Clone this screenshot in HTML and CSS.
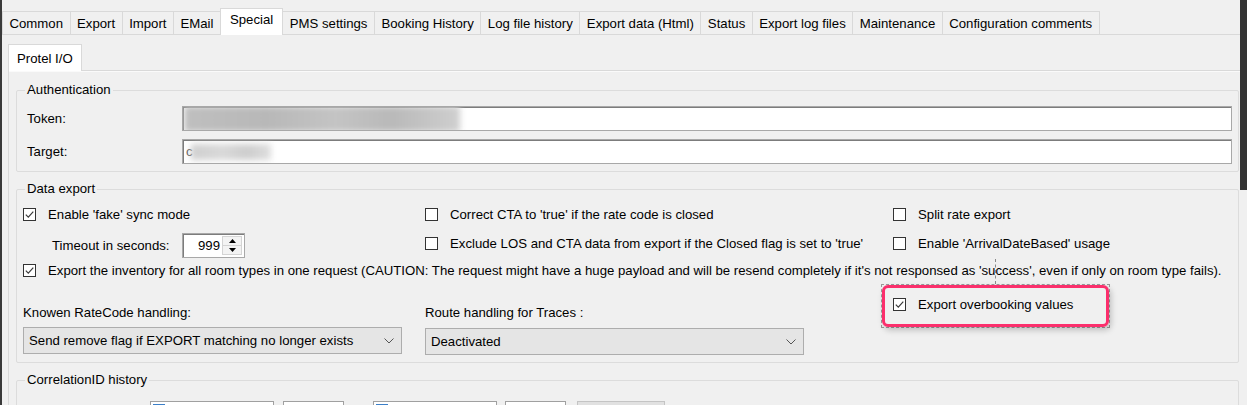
FILE: index.html
```html
<!DOCTYPE html>
<html>
<head>
<meta charset="utf-8">
<link rel="stylesheet" href="styles.css">
</head>
<body>
<div class="window">
  <div class="edge-l"></div>
  <div class="main">
    <div class="tabs">
      <div class="tab first">Common</div>
      <div class="tab">Export</div>
      <div class="tab">Import</div>
      <div class="tab">EMail</div>
      <div class="tab sel">Special</div>
      <div class="tab">PMS settings</div>
      <div class="tab">Booking History</div>
      <div class="tab">Log file history</div>
      <div class="tab">Export data (Html)</div>
      <div class="tab">Status</div>
      <div class="tab">Export log files</div>
      <div class="tab">Maintenance</div>
      <div class="tab">Configuration comments</div>
    </div>
    <div class="panel">
      <div class="subtabs"><div class="subtab">Protel I/O</div></div>
      <div class="subpanel">
        <fieldset class="group auth">
          <legend>Authentication</legend>
          <div class="field">
            <span class="flabel">Token:</span>
            <div class="textbox"><div class="blur blur-token"></div></div>
          </div>
          <div class="field">
            <span class="flabel">Target:</span>
            <div class="textbox"><span class="tchar">c</span><div class="blur blur-target"></div></div>
          </div>
        </fieldset>

        <fieldset class="group data">
          <legend>Data export</legend>
          <div class="row-a">
            <div class="col c1">
              <div class="check-line"><span class="cb on"><svg viewBox="0 0 11 11" width="11" height="11"><path d="M1.8 5.6 L4.3 8.2 L9.3 2.6" fill="none" stroke="#3a3a3a" stroke-width="1.2"/></svg></span>Enable 'fake' sync mode</div>
              <div class="timeout">
                <span class="tlabel">Timeout in seconds:</span>
                <div class="numeric">
                  <span class="nval">999</span>
                  <div class="spin">
                    <div class="sbtn"><svg width="7" height="4" viewBox="0 0 7 4"><path d="M0 4 L3.5 0 L7 4Z" fill="#000"/></svg></div>
                    <div class="sbtn"><svg width="7" height="4" viewBox="0 0 7 4"><path d="M0 0 L3.5 4 L7 0Z" fill="#000"/></svg></div>
                  </div>
                </div>
              </div>
            </div>
            <div class="col c2">
              <div class="check-line"><span class="cb"></span>Correct CTA to 'true' if the rate code is closed</div>
              <div class="check-line second">
                <span class="cb"></span>Exclude LOS and CTA data from export if the Closed flag is set to 'true'</div>
            </div>
            <div class="col c3">
              <div class="check-line"><span class="cb"></span>Split rate export</div>
              <div class="check-line second"><span class="cb"></span>Enable 'ArrivalDateBased' usage</div>
            </div>
          </div>
          <div class="row-b">
            <div class="check-line"><span class="cb on"><svg viewBox="0 0 11 11" width="11" height="11"><path d="M1.8 5.6 L4.3 8.2 L9.3 2.6" fill="none" stroke="#3a3a3a" stroke-width="1.2"/></svg></span>Export the inventory for all room types in one request (CAUTION: The request might have a huge payload and will be resend completely if it's not responsed as 'success', even if only on room type fails).</div>
          </div>
          <div class="row-c">
            <div class="col c1 lower">
              <div class="clabel">Knowen RateCode handling:</div>
              <div class="combo"><span>Send remove flag if EXPORT matching no longer exists</span><svg width="10" height="6" viewBox="0 0 10 6"><path d="M0.5 0.5 L5 5 L9.5 0.5" fill="none" stroke="#555" stroke-width="1"/></svg></div>
            </div>
            <div class="col c2 lower">
              <div class="clabel">Route handling for Traces :</div>
              <div class="combo c-route"><span>Deactivated</span><svg width="10" height="6" viewBox="0 0 10 6"><path d="M0.5 0.5 L5 5 L9.5 0.5" fill="none" stroke="#555" stroke-width="1"/></svg></div>
            </div>
            <div class="col c3 over">
              <div class="check-line"><span class="cb on"><svg viewBox="0 0 11 11" width="11" height="11"><path d="M1.8 5.6 L4.3 8.2 L9.3 2.6" fill="none" stroke="#3a3a3a" stroke-width="1.2"/></svg></span>Export overbooking values</div>
            </div>
          </div>
        </fieldset>

        <fieldset class="group corr">
          <legend>CorrelationID history</legend>
          <div class="corr-row">
            <div class="dtp d1"><span class="dcb"></span></div>
            <div class="nsmall"></div>
            <div class="dtp d2"><span class="dcb"></span></div>
            <div class="nsmall"></div>
            <div class="btn"></div>
            <div class="btn btn-r"></div>
          </div>
        </fieldset>
      </div>
    </div>
  </div>
  <div class="edge-r"></div>
  <div class="focus-line"></div>
  <div class="focus-rect"></div>
  <div class="highlight"></div>
</div>
</body>
</html>
```

FILE: styles.css
```css
html, body {
  margin: 0;
  padding: 0;
}
body {
  width: 1247px;
  height: 405px;
  overflow: hidden;
  background: #f0f0f0;
  font-family: "Liberation Sans", Arial, sans-serif;
  font-size: 13.2px;
  color: #000;
}
.window {
  position: relative;
  display: flex;
  width: 1247px;
  height: 405px;
  overflow: hidden;
}
.edge-l {
  width: 2px;
  flex: none;
  background: #3a3a3a;
}
.edge-r {
  position: absolute;
  right: 0;
  top: 0;
  width: 7px;
  height: 190px;
  background: #333;
}
.main {
  flex: 1;
  min-width: 0;
}

/* main tabs */
.tabs {
  display: flex;
  align-items: flex-end;
  height: 34px;
}
.tab {
  height: 22px;
  padding: 0 6.5px;
  display: flex;
  align-items: center;
  border: 1px solid #d9d9d9;
  border-bottom: none;
  border-left: none;
  background: #f0f0f0;
  white-space: nowrap;
}
.tab.first {
  border-left: 1px solid #d9d9d9;
}
.tab.sel {
  margin-bottom: -1px;
  background: #fff;
  position: relative;
  z-index: 1;
  align-items: flex-start;
  padding: 3px 9px 0;
  box-sizing: border-box;
  height: 27px;
  border-left: 1px solid #d9d9d9;
  margin-left: -1px;
}
.panel {
  border-top: 1px solid #d9d9d9;
  padding: 9px 0 0 6px;
}

/* sub tabs */
.subtabs {
  display: flex;
}
.subtab {
  box-sizing: border-box;
  height: 27px;
  margin-bottom: -1px;
  padding: 0 8px;
  display: flex;
  align-items: center;
  background: #fff;
  border: 1px solid #d9d9d9;
  border-bottom: none;
  position: relative;
  z-index: 1;
}
.subpanel {
  border-top: 1px solid #d9d9d9;
  border-left: 1px solid #d9d9d9;
  padding: 12px 8px 0 7px;
  box-shadow: inset 0 1px 0 #fafafa;
}

/* group boxes */
.group {
  margin: 0;
  padding: 0 6px 7px;
  border: 1px solid #dcdcdc;
  border-radius: 2px;
  min-width: 0;
}
.group legend {
  padding: 0 2px;
  margin-left: 2px;
  line-height: 14px;
  height: 14px;
}
.data, .corr {
  margin-top: 10px;
}

/* auth */
.field {
  display: flex;
  align-items: center;
  height: 25px;
  margin-top: 8px;
}
.field:first-of-type {
  margin-top: 9px;
}
.flabel {
  width: 159px;
  padding-left: 4px;
  box-sizing: border-box;
  flex: none;
}
.textbox {
  flex: 1;
  height: 25px;
  box-sizing: border-box;
  background: #fff;
  border: 1px solid #a8a8a8;
  box-shadow: inset 1px 1px 0 #7c7c7c;
  position: relative;
  overflow: hidden;
  display: flex;
  align-items: center;
}
.blur {
  filter: blur(3px);
}
.blur-token {
  width: 276px;
  height: 26px;
  margin-left: 1px;
  background: linear-gradient(90deg, #bfbfbf 0%, #b8b8b8 30%, #c4c4c4 55%, #b9b9b9 75%, #cfcfcf 100%);
}
.tchar {
  margin-left: 3px;
  color: #555;
  flex: none;
}
.blur-target {
  width: 80px;
  height: 16px;
  margin-left: -2px;
  background: linear-gradient(90deg, #cfcfcf, #d9d9d9 40%, #cdcdcd 70%, #dedede);
}

/* data export */
.row-a, .row-c {
  display: flex;
}
.row-a {
  margin-top: 8px;
}
.col.c1 {
  width: 402px;
  flex: none;
}
.col.c2 {
  width: 468px;
  flex: none;
}
.col.c3 {
  flex: 1;
}
.check-line {
  display: flex;
  align-items: center;
  height: 20px;
  white-space: nowrap;
}
.check-line.second {
  margin-top: 9px;
}
.cb {
  width: 13px;
  height: 13px;
  box-sizing: border-box;
  border: 1px solid #333;
  background: #fff;
  margin-right: 12px;
  flex: none;
  display: flex;
  align-items: center;
  justify-content: center;
}
.timeout {
  display: flex;
  align-items: center;
  height: 25px;
  margin-top: 9px;
}
.tlabel {
  width: 159px;
  padding-left: 29px;
  box-sizing: border-box;
  flex: none;
}
.numeric {
  width: 63px;
  height: 25px;
  box-sizing: border-box;
  background: #fff;
  border: 1px solid #a8a8a8;
  box-shadow: inset 1px 1px 0 #7c7c7c;
  display: flex;
  align-items: stretch;
}
.nval {
  flex: 1;
  padding-right: 2px;
  display: flex;
  align-items: center;
  justify-content: flex-end;
}
.spin {
  width: 18px;
  margin: 2px 2px 2px 0;
  display: flex;
  flex-direction: column;
  border: 1px solid #d4d4d4;
  background: #f3f3f3;
}
.sbtn {
  flex: 1;
  display: flex;
  align-items: center;
  justify-content: center;
}
.sbtn + .sbtn {
  border-top: 1px solid #d4d4d4;
}
.row-b {
  margin-top: 2px;
}
.col.lower {
  padding-top: 24px;
}
.col.over {
  padding-top: 14px;
}
.clabel {
  height: 18px;
  line-height: 18px;
}
.combo {
  margin-top: 5px;
  width: 379px;
  height: 27px;
  box-sizing: border-box;
  background: #e5e5e5;
  border: 1px solid #adadad;
  display: flex;
  align-items: center;
  justify-content: space-between;
  padding: 0 7px 0 5px;
}
.combo.c-route {
  margin-top: 6px;
}

/* correlation */
.corr-row {
  display: flex;
  align-items: flex-start;
  margin-top: 14px;
  height: 30px;
}
.dtp {
  width: 124px;
  height: 24px;
  box-sizing: border-box;
  background: #fff;
  border: 1px solid #a0a0a0;
  padding: 2px;
  flex: none;
}
.d1 {
  margin-left: 127px;
}
.dcb {
  display: block;
  width: 12px;
  height: 12px;
  background: #5b9de2;
  border: 1px solid #3c7fc8;
  box-sizing: border-box;
}
.nsmall {
  width: 61px;
  height: 24px;
  box-sizing: border-box;
  background: #fff;
  border: 1px solid #a0a0a0;
  margin-left: 9px;
  flex: none;
}
.nsmall + .dtp {
  margin-left: 29px;
}
.d2 + .nsmall {
  margin-left: 8px;
}
.btn {
  width: 88px;
  height: 24px;
  box-sizing: border-box;
  background: #e1e1e1;
  border: 1px solid #c4c4c4;
  margin-left: 11px;
  flex: none;
}
.btn-r {
  margin-left: auto;
  margin-right: 45px;
  margin-top: 4px;
  width: 65px;
  border-color: #adadad;
}

/* overlay highlight */
.highlight {
  position: absolute;
  left: 882px;
  top: 285px;
  width: 227px;
  height: 42px;
  box-sizing: border-box;
  border: 3px solid #fb2f6c;
  border-radius: 6px;
  box-shadow: 2px 3px 6px rgba(0, 0, 0, 0.22);
}
.focus-rect {
  position: absolute;
  left: 881px;
  top: 284px;
  width: 229px;
  height: 44px;
  box-sizing: border-box;
  border: 1px dashed #9a9a9a;
}
.focus-line {
  position: absolute;
  left: 995px;
  top: 259px;
  width: 0;
  height: 25px;
  border-left: 1px dashed #8a8a8a;
}
```
